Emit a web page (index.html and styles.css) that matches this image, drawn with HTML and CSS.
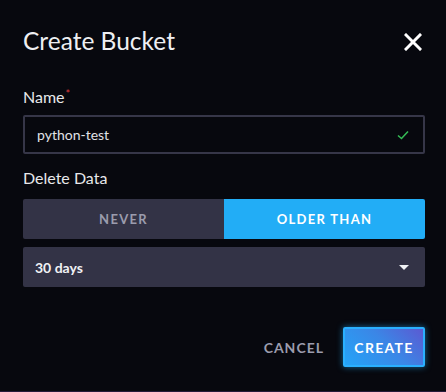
FILE: index.html
```html
<!DOCTYPE html>
<html lang="en">
<head>
  <meta charset="UTF-8" />
  <title>Create Bucket</title>
  <link rel="stylesheet" href="styles.css">
</head>
<body>
  <div class="overlay">
    <div class="dialog-header">
      <div class="dialog-title">Create Bucket</div>
      <button class="dialog-close" aria-label="Close">
        <svg width="18" height="18" viewBox="0 0 18 18">
          <path d="M2 2 L16 16 M16 2 L2 16" stroke="#fff" stroke-width="3" stroke-linecap="square" />
        </svg>
      </button>
    </div>
    <div class="form-body">
      <div class="form-label">Name<span class="required">*</span></div>
      <div class="input-wrap">
        <span class="input-value">python-test</span>
        <svg class="input-status" width="12" height="10" viewBox="0 0 12 10">
          <path d="M1 5.5 L4.5 8.5 L11 1.5" fill="none" stroke="#34bb55" stroke-width="1.6" />
        </svg>
      </div>
      <div class="form-label label-delete">Delete Data</div>
      <div class="toggle">
        <div class="toggle-option">NEVER</div>
        <div class="toggle-option active">OLDER THAN</div>
      </div>
      <div class="dropdown">
        <span class="dropdown-value">30 days</span>
        <span class="caret"></span>
      </div>
    </div>
    <div class="dialog-footer">
      <button class="btn btn-cancel">CANCEL</button>
      <button class="btn btn-create">CREATE</button>
    </div>
  </div>
</body>
</html>
```

FILE: styles.css
```css
* {
  margin: 0;
  padding: 0;
  box-sizing: border-box;
}
body {
  font-family: Lato, 'Noto Sans', sans-serif;
  background-color: #07080e;
  color: #e7e8eb;
  width: 446px;
  height: 392px;
  overflow: hidden;
  border-bottom: 1px solid #241a3a;
}
.overlay {
  padding: 0 21px 0 23px;
}
/* Header */
.dialog-header {
  height: 84px;
  display: flex;
  justify-content: space-between;
  align-items: center;
}
.dialog-title {
  font-size: 24.5px;
  font-weight: 400;
  color: #eeeff2;
  margin-bottom: 3px;
}
.dialog-close {
  background: none;
  border: none;
  width: 18px;
  height: 18px;
  margin-right: 3px;
  margin-bottom: 1px;
  display: flex;
}
/* Form */
.form-body {
  display: flex;
  flex-direction: column;
}
.form-label {
  font-size: 16px;
  color: #e7e8eb;
  height: 31px;
  line-height: 20px;
}
.required {
  color: #dc3b3b;
  font-size: 11px;
  vertical-align: 5px;
  margin-left: 1px;
}
.input-wrap {
  height: 39px;
  border: 2px solid #363648;
  border-radius: 2px;
  display: flex;
  align-items: center;
  justify-content: space-between;
  padding: 0 14px 0 12px;
  margin-bottom: 14px;
}
.input-value {
  font-size: 14px;
  color: #e1e2e6;
}
.label-delete {
  height: 31px;
}
.toggle {
  display: flex;
  height: 40px;
  border-radius: 2px;
  overflow: hidden;
  margin-bottom: 8px;
}
.toggle-option {
  flex: 1;
  display: flex;
  align-items: center;
  justify-content: center;
  background-color: #333346;
  color: #9b9cad;
  font-size: 13px;
  font-weight: 700;
  letter-spacing: 1.3px;
}
.toggle-option.active {
  background-color: #22adf6;
  color: #fff;
}
.dropdown {
  height: 40px;
  background-color: #333346;
  border-radius: 2px;
  display: flex;
  align-items: center;
  justify-content: space-between;
  padding: 0 16px 0 12px;
}
.dropdown-value {
  font-size: 14px;
  font-weight: 700;
  color: #f0f1f4;
}
.caret {
  width: 0;
  height: 0;
  border-left: 5px solid transparent;
  border-right: 5px solid transparent;
  border-top: 5px solid #f0f1f4;
}
/* Footer */
.dialog-footer {
  display: flex;
  justify-content: flex-end;
  align-items: center;
  gap: 17px;
  margin-top: 40px;
}
.btn {
  font-family: Lato, 'Noto Sans', sans-serif;
  font-size: 14px;
  font-weight: 700;
  letter-spacing: 1.3px;
  border: none;
  background: none;
  height: 40px;
}
.btn-cancel {
  color: #9b9cad;
  letter-spacing: 1px;
  padding: 0 2px;
}
.btn-create {
  width: 82px;
  color: #fff;
  border: 2px solid #2ab0ff;
  border-radius: 2px;
  background: linear-gradient(45deg, #24a4f8 0%, #3b86e6 55%, #5b5ad2 100%);
  box-shadow: 0 0 6px rgba(34, 173, 246, 0.6);
}
```
